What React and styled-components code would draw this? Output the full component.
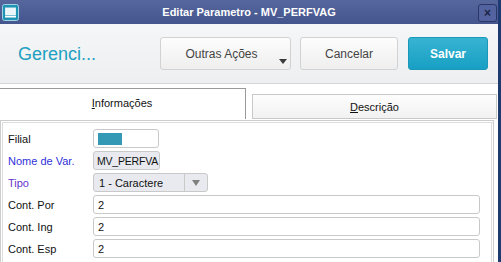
import React from "react";
import styled, { createGlobalStyle } from "styled-components";

const Global = createGlobalStyle`
  html, body {
    margin: 0;
    padding: 0;
    background: #ffffff;
  }
  body {
    font-family: "Liberation Sans", Arial, sans-serif;
  }
`;

const Window = styled.div`
  width: 498px;
  height: 262px;
  overflow: hidden;
  border-right: 3px solid #1d3b70;
  display: flex;
  flex-direction: column;
  background: #ffffff;
`;

const TitleBar = styled.div`
  height: 24px;
  flex: none;
  display: flex;
  align-items: center;
  justify-content: space-between;
  padding: 0 1px 0 2px;
  background: linear-gradient(#56679e, #44548d);
  position: relative;
`;

const Title = styled.div`
  position: absolute;
  left: 0;
  right: 0;
  text-align: center;
  color: #ffffff;
  font-size: 11px;
  font-weight: bold;
  pointer-events: none;
`;

const CloseButton = styled.div`
  width: 17px;
  height: 16px;
  border: 1px solid #2b3766;
  border-radius: 3px;
  background: #5363a0;
  color: #1c2447;
  font-size: 12px;
  font-weight: bold;
  display: flex;
  align-items: center;
  justify-content: center;
  margin-top: 1px;
  z-index: 1;
`;

const Header = styled.div`
  height: 59px;
  flex: none;
  display: flex;
  align-items: center;
  background: linear-gradient(#f5f6f7, #eeeff0);
  border-bottom: 1px solid #d6d6d6;
  padding: 0 10px 0 18px;
`;

const HeaderTitle = styled.div`
  flex: 1;
  color: #1d9fc2;
  font-size: 18px;
  margin-top: 2px;
`;

const Button = styled.div`
  position: relative;
  height: 33px;
  width: ${(p) => p.$w}px;
  margin-left: ${(p) => p.$ml || 0}px;
  box-sizing: border-box;
  border: 1px solid ${(p) => (p.$primary ? "#1a98ba" : "#d2d2d2")};
  border-radius: 3px;
  background: ${(p) =>
    p.$primary
      ? "linear-gradient(#38b3d2, #17a0c4)"
      : "linear-gradient(#fdfdfd, #eeeeee)"};
  color: ${(p) => (p.$primary ? "#ffffff" : "#444444")};
  font-weight: ${(p) => (p.$primary ? "bold" : "normal")};
  font-size: 12px;
  display: flex;
  align-items: center;
  justify-content: center;
  padding-right: ${(p) => (p.$menu ? 8 : 0)}px;
`;

const Caret = styled.span`
  position: absolute;
  right: 3px;
  bottom: 5px;
  width: 0;
  height: 0;
  border-left: 4px solid transparent;
  border-right: 4px solid transparent;
  border-top: 5px solid #3a3a3a;
`;

const Tabs = styled.div`
  display: flex;
  align-items: flex-start;
  margin-top: 4px;
  height: 32px;
  flex: none;
`;

const Tab = styled.div`
  box-sizing: border-box;
  width: ${(p) => p.$w}px;
  margin-left: ${(p) => p.$ml}px;
  margin-top: ${(p) => (p.$active ? 0 : 6)}px;
  height: ${(p) => (p.$active ? 31 : 25)}px;
  border: 1px solid ${(p) => (p.$active ? "#9a9a9a" : "#c9c9c9")};
  border-bottom: ${(p) => (p.$active ? "none" : "1px solid #c9c9c9")};
  background: ${(p) =>
    p.$active ? "#ffffff" : "linear-gradient(#fdfdfd, #f2f2f2)"};
  color: #111111;
  font-size: 11px;
  display: flex;
  align-items: center;
  justify-content: center;
  padding-bottom: ${(p) => (p.$active ? 2 : 0)}px;

  u {
    text-decoration: underline;
  }
`;

const Panel = styled.div`
  flex: 1;
  width: 494px;
  box-sizing: border-box;
  border: 1px solid #cdcdcd;
  border-bottom: none;
  box-shadow: inset 1px 1px 0 #ffffff, inset 2px 2px 0 #dedede,
    inset -1px 0 0 #ffffff, inset -2px 0 0 #dedede;
  padding: 8px 0 0 7px;
  display: grid;
  grid-template-columns: 85px 1fr;
  grid-auto-rows: 19px;
  row-gap: 3px;
  align-content: start;
`;

const Label = styled.div`
  font-size: 11px;
  color: ${(p) => p.$color || "#111111"};
  display: flex;
  align-items: center;
`;

const Field = styled.div`
  box-sizing: border-box;
  width: ${(p) => p.$w}px;
  height: ${(p) => p.$h || 19}px;
  border: 1px solid #c9c9c9;
  border-radius: 3px;
  background: ${(p) => (p.$disabled ? "#e8eaef" : "#ffffff")};
  font-size: ${(p) => (p.$tight ? 10.5 : 11)}px;
  letter-spacing: ${(p) => (p.$tight ? -0.2 : 0)}px;
  color: #111111;
  display: flex;
  align-items: center;
  padding-left: ${(p) => (p.$tight ? 3 : 4)}px;
  overflow: hidden;
  white-space: nowrap;
`;

const Swatch = styled.div`
  width: 24px;
  height: 12px;
  background: #3399b4;
`;

const Select = styled(Field)`
  padding-left: 0;
  background: #e8eaef;
`;

const SelectText = styled.div`
  flex: 1;
  padding-left: 5px;
`;

const SelectArrow = styled.div`
  width: 22px;
  height: 100%;
  border-left: 1px solid #c9c9c9;
  display: flex;
  align-items: center;
  justify-content: center;

  &::after {
    content: "";
    border-left: 4px solid transparent;
    border-right: 4px solid transparent;
    border-top: 6px solid #808080;
  }
`;

function AppIcon() {
  return (
    <svg width="17" height="17" viewBox="0 0 17 17">
      <rect x="0.5" y="0.5" width="16" height="16" rx="2" fill="#1f93b4" stroke="#9fd3e3" />
      <rect x="3.5" y="4" width="10" height="7" fill="#ffffff" stroke="#d8eef4" />
      <rect x="4.5" y="5" width="8" height="5" fill="#e9f5f9" />
      <rect x="3" y="12" width="11" height="1.5" fill="#ffffff" />
    </svg>
  );
}

export default function App() {
  return (
    <>
      <Global />
      <Window>
        <TitleBar>
          <AppIcon />
          <Title>Editar Parametro - MV_PERFVAG</Title>
          <CloseButton>×</CloseButton>
        </TitleBar>

        <Header>
          <HeaderTitle>Gerenci...</HeaderTitle>
          <Button $w={131} $menu>
            Outras Ações
            <Caret />
          </Button>
          <Button $w={98} $ml={9}>
            Cancelar
          </Button>
          <Button $w={80} $ml={10} $primary>
            Salvar
          </Button>
        </Header>

        <Tabs>
          <Tab $active $w={248} $ml={-2}>
            <span>
              <u>I</u>nformações
            </span>
          </Tab>
          <Tab $w={245} $ml={6}>
            <span>
              <u>D</u>escrição
            </span>
          </Tab>
        </Tabs>

        <Panel>
          <Label>Filial</Label>
          <Field $w={66}>
            <Swatch />
          </Field>

          <Label $color="#3030d8">Nome de Var.</Label>
          <Field $w={67} $disabled $tight>
            MV_PERFVA
          </Field>

          <Label $color="#6633cc">Tipo</Label>
          <Select $w={115}>
            <SelectText>1 - Caractere</SelectText>
            <SelectArrow />
          </Select>

          <Label>Cont. Por</Label>
          <Field $w={387}>2</Field>

          <Label>Cont. Ing</Label>
          <Field $w={387}>2</Field>

          <Label>Cont. Esp</Label>
          <Field $w={387}>2</Field>
        </Panel>
      </Window>
    </>
  );
}
